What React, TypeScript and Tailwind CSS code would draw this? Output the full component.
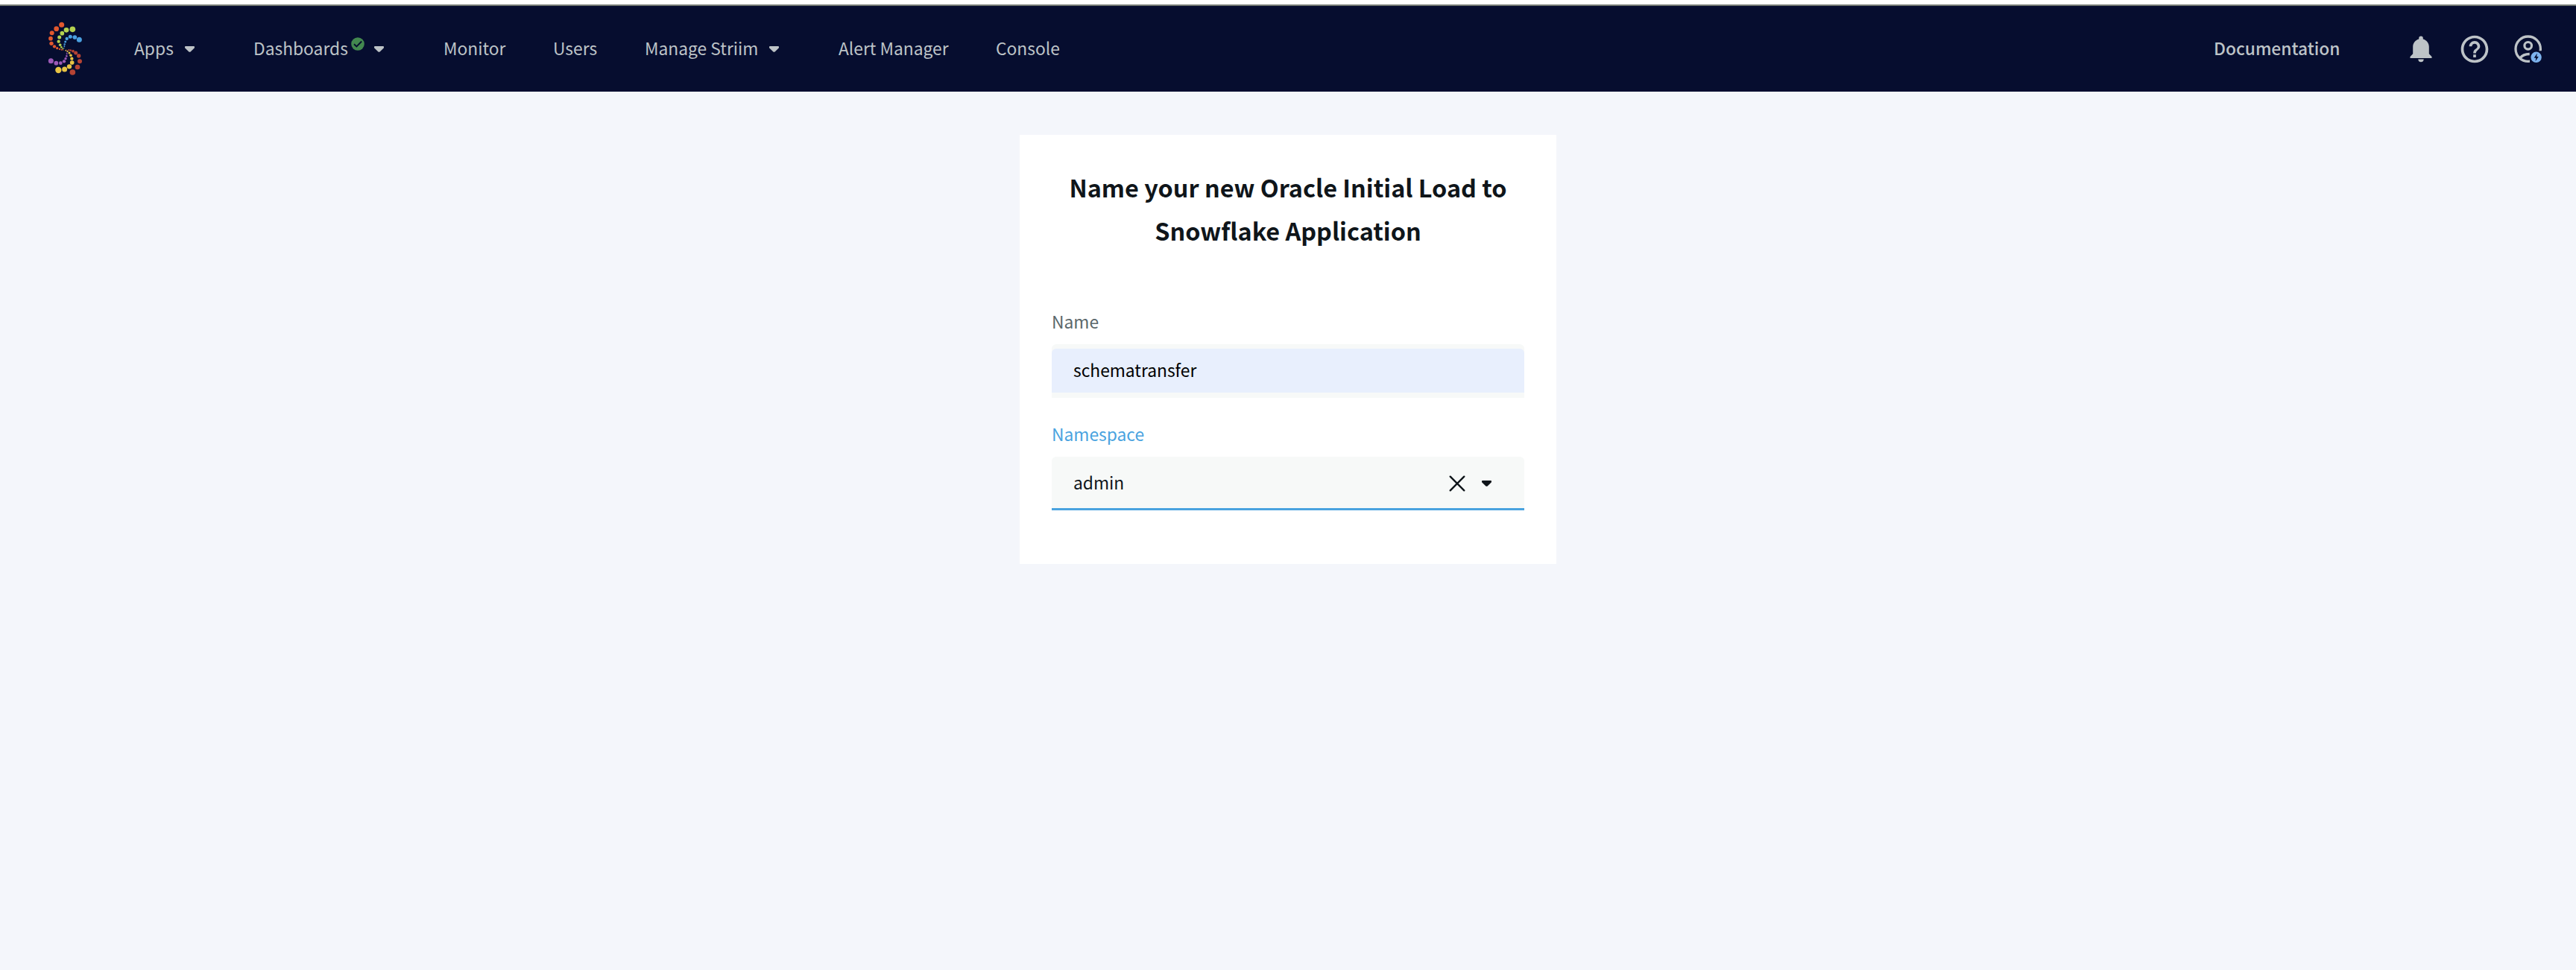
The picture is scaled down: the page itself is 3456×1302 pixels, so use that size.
import type { ReactNode } from 'react';

type Dot = [number, number, number];

const dots: { color: string; points: Dot[] }[] = [
  { color: '#e2582e', points: [[128, 100, 10.5], [107, 116, 10], [89, 133, 9], [84, 155, 8.5], [87, 175, 8], [99, 187, 6.5], [110, 194, 5], [120, 198, 3.5], [128, 200, 3], [134, 201, 2]] },
  { color: '#b4d150', points: [[172, 118, 11.5], [147, 121, 10], [130, 134, 8.5], [119, 150, 7.5], [116, 167, 6.5], [122, 181, 5.5], [127, 190, 4], [133, 196, 3]] },
  { color: '#4aa0e0', points: [[199, 160, 10.5], [181, 150, 8.5], [163, 148, 7.5], [149, 156, 6.5], [143, 168, 4.5], [140, 178, 3.5], [139, 186, 3], [138, 193, 2]] },
  { color: '#9b59b6', points: [[85, 245, 10.5], [106, 254, 8.5], [124, 254, 7], [138, 247, 6.5], [144, 236, 5], [148, 226, 4], [149, 217, 3], [149, 209, 2]] },
  { color: '#b54334', points: [[172, 291, 11.5], [192, 270, 10], [201, 247, 9], [197, 225, 8], [185, 213, 7.5], [174, 206, 5.5], [164, 203, 4], [157, 201, 3], [150, 202, 2]] },
  { color: '#e8c444', points: [[115, 282, 12.5], [140, 279, 10.5], [159, 268, 9.5], [170, 252, 8.5], [169, 236, 6.5], [165, 223, 5.5], [159, 213, 4.5], [152, 207, 3], [145, 203, 2.5]] },
];

function Logo() {
  return (
    <svg viewBox="60 60 180 270" className="h-[90px] w-[60px] shrink-0">
      {dots.map(({ color, points }) =>
        points.map(([x, y, r]) => <circle key={`${x}-${y}`} cx={x} cy={y} r={r} fill={color} />),
      )}
    </svg>
  );
}

function Caret({ className }: { className: string }) {
  return (
    <svg viewBox="0 0 13 8" fill="currentColor" className={`h-2 w-[13px] shrink-0 ${className}`}>
      <path d="M1 0h11q1 0 1 1v.8q0 .5-.5 1L7.6 7.4q-1.1.9-2.2 0L.5 2.8Q0 2.3 0 1.8V1q0-1 1-1Z" />
    </svg>
  );
}

function VerifiedBadge() {
  return (
    <svg viewBox="0 0 18 18" className="mb-3 ml-1 h-[18px] w-[18px] shrink-0">
      <circle cx="9" cy="9" r="8.8" fill="#43884f" />
      <path d="M4 9.2l3.4 3.3 6.8-7" fill="none" stroke="#060d2f" strokeWidth="1.9" />
    </svg>
  );
}

function NavItem({ className, children }: { className: string; children: ReactNode }) {
  return (
    <a className={`flex h-12 shrink-0 items-center whitespace-nowrap leading-[34px] ${className}`}>{children}</a>
  );
}

function BellIcon() {
  return (
    <svg viewBox="0 0 30 36" fill="currentColor" className="mr-[35px] mt-px h-9 w-[30px]">
      <path d="M12.2 3.4a2.8 2.8 0 0 1 5.6 0v1.1c4.7 1.2 8 5.4 8 10.3V24.2l3.2 3.3q.5.5.5 1V30H.5v-1.5q0-.5.5-1l3.2-3.3V14.8c0-4.9 3.3-9.1 8-10.3Z" />
      <path d="M11.3 31.5h7.4a3.7 3.7 0 0 1-7.4 0Z" />
    </svg>
  );
}

function HelpIcon() {
  return (
    <svg viewBox="0 0 24 24" fill="currentColor" className="mr-[31px] h-11 w-11">
      <path d="M11 18h2v-2h-2v2zm1-16C6.48 2 2 6.48 2 12s4.48 10 10 10 10-4.48 10-10S17.52 2 12 2zm0 18c-4.41 0-8-3.59-8-8s3.59-8 8-8 8 3.59 8 8-3.59 8-8 8zm0-14c-2.21 0-4 1.79-4 4h2c0-1.1.9-2 2-2s2 .9 2 2c0 2-3 1.75-3 5h2c0-2.25 3-2.5 3-5 0-2.21-1.79-4-4-4z" />
    </svg>
  );
}

function AccountIcon() {
  return (
    <svg viewBox="0 0 38 38" className="h-[38px] w-[38px]" fill="none" stroke="#bdc3c7">
      <circle cx="18.7" cy="18.7" r="16.7" strokeWidth="3.3" />
      <circle cx="18.7" cy="14.3" r="4.8" strokeWidth="3.2" />
      <path d="M8 31c3-4 6.5-5.4 12.7-5.5" strokeWidth="3.4" />
      <path d="M21 38V26L25 21.3h13V38Z" fill="#060d2f" stroke="none" />
      <circle cx="29.6" cy="29.8" r="7.2" fill="#7db3ee" stroke="none" />
      <path d="M30.9 24.5l-4.2 6.2h2.6l-.7 4.6 4.2-6.3h-2.6Z" fill="#060d2f" stroke="none" />
    </svg>
  );
}

export default function App() {
  return (
    <div className="flex min-h-[1302px] w-full flex-col bg-[#f4f6fb] font-['Noto_Sans_CJK_SC','Source_Sans_Pro',sans-serif] text-[22.8px] text-[#0f151a]">
      <header className="flex h-[123px] items-center border-t-[6px] border-white bg-[#060d2f] text-[#bdc3c7] shadow-[inset_0_2px_0_#737973]">
        <div className="ml-[60px] mt-px flex h-[90px] w-[60px]">
          <Logo />
        </div>
        <nav className="ml-[60px] flex items-center">
          <NavItem className="w-[160px]">
            <span className="w-[52px]">Apps</span>
            <Caret className="ml-[15.5px] mt-[3px]" />
          </NavItem>
          <NavItem className="w-[255px]">
            <span className="w-[127px]">Dashboards</span>
            <VerifiedBadge />
            <Caret className="ml-[13px] mt-[3px]" />
          </NavItem>
          <NavItem className="w-[147px]">Monitor</NavItem>
          <NavItem className="w-[123px]">Users</NavItem>
          <NavItem className="w-[260px]">
            <span className="w-[153px]">Manage Striim</span>
            <Caret className="ml-3.5 mt-[3px]" />
          </NavItem>
          <NavItem className="w-[211px]">Alert Manager</NavItem>
          <NavItem className="w-[90px]">Console</NavItem>
        </nav>
        <div className="ml-auto flex items-center pr-[45px]">
          <NavItem className="mr-[92px] w-[171px] text-[22.8px] font-medium">Documentation</NavItem>
          <div className="flex items-center pt-0.5">
            <BellIcon />
            <HelpIcon />
            <AccountIcon />
          </div>
        </div>
      </header>

      <main className="flex justify-center pt-[58px]">
        <section className="flex h-[576px] w-[720px] flex-col bg-white px-[43px] pt-[41px]">
          <h1 className="text-center text-[32.4px] font-bold leading-[58px] text-[#0f151a]">
            Name your new Oracle Initial Load to
            <br />
            Snowflake Application
          </h1>

          <label className="mt-[74px] leading-[40px] text-[#5b686b]">Name</label>
          <div className="mt-2.5 flex h-[72px] w-[634px] shrink-0 flex-col rounded-t-md bg-[#f7f9f8] pt-1.5">
            <div className="flex h-[59px] items-center rounded-t-md bg-[#e8effd] pl-[29px] text-black">schematransfer</div>
          </div>

          <label className="mt-[29px] leading-[40px] text-[#4aa3df]">Namespace</label>
          <div className="mt-2.5 flex h-[72px] w-[634px] shrink-0 items-center rounded-t-md border-b-[3px] border-[#4aa3df] bg-[#f7f9f8] pl-[29px] pr-[44px]">
            <span className="flex-1 pt-px">admin</span>
            <svg viewBox="0 0 22 22" className="mt-0.5 h-[22px] w-[22px]" fill="none" stroke="#0f151a" strokeWidth="2.4" strokeLinecap="round">
              <path d="M1.7 1.7l18.6 18.6M20.3 1.7L1.7 20.3" />
            </svg>
            <Caret className="ml-[22px] mt-0.5" />
          </div>
        </section>
      </main>
    </div>
  );
}
